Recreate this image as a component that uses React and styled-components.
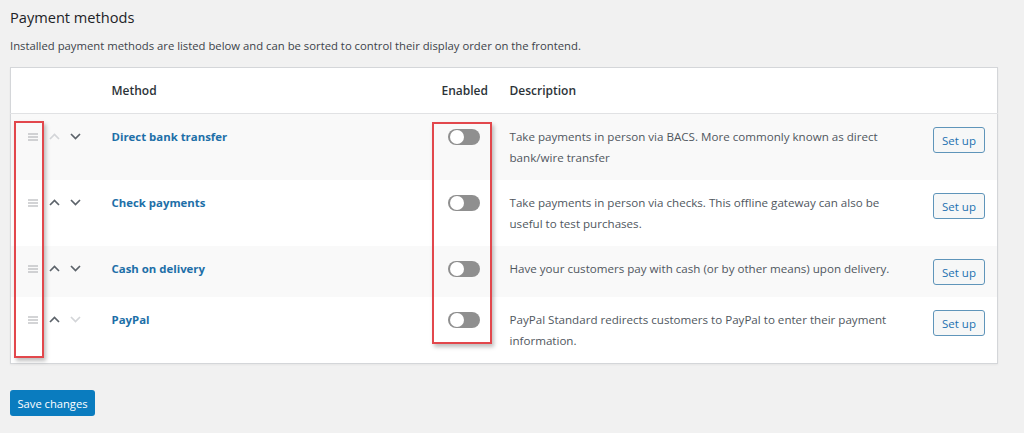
import React from "react";
import styled, { createGlobalStyle } from "styled-components";

const GlobalStyle = createGlobalStyle`
  html, body {
    margin: 0;
    padding: 0;
    background: #f1f1f1;
  }
  body {
    font-family: "Open Sans", "Noto Sans", sans-serif;
    color: #3c434a;
  }
`;

const Page = styled.div`
  position: relative;
  width: 1024px;
  height: 433px;
  padding: 6px 26px 0 10px;
  box-sizing: border-box;
  overflow: hidden;
`;

const Title = styled.h2`
  margin: 0;
  font-size: 14.6px;
  font-weight: 400;
  line-height: 22px;
  color: #1d2327;
`;

const Intro = styled.p`
  margin: 9px 0 12px;
  font-size: 11.3px;
  line-height: 18px;
  color: #3c434a;
`;

const Table = styled.table`
  width: 988px;
  border-collapse: collapse;
  background: #fff;
  border: 1px solid #d4d6d9;
  box-shadow: 0 1px 2px rgba(0, 0, 0, 0.05);
  table-layout: fixed;
`;

const Th = styled.th`
  text-align: ${(p) => p.$align || "left"};
  font-size: 12px;
  font-weight: 600;
  color: #2c3338;
  line-height: 21px;
  padding: 12px 12px;
  border-bottom: 1px solid #e1e2e4;
`;

const Row = styled.tr`
  background: ${(p) => (p.$striped ? "#f9f9f9" : "#fff")};
`;

const Td = styled.td`
  vertical-align: top;
  text-align: ${(p) => p.$align || "left"};
  padding: 12px 12px;
  font-size: 11.6px;
  line-height: 21px;
`;

const SortCell = styled.div`
  display: flex;
  align-items: center;
  height: 21px;
  padding-left: 4px;
`;

const Handle = styled.span`
  display: inline-flex;
  width: 12px;
  justify-content: center;
  margin-right: 5px;
`;

const Arrow = styled.button`
  border: 0;
  background: none;
  padding: 0;
  width: 21px;
  height: 21px;
  display: inline-flex;
  align-items: center;
  justify-content: center;
  cursor: ${(p) => (p.$disabled ? "default" : "pointer")};
  color: ${(p) => (p.$disabled ? "#d3d5d8" : "#5c636a")};
`;

const MethodName = styled.a`
  font-weight: 700;
  font-size: 11.4px;
  color: #1d6fa8;
  text-decoration: none;
`;

const Toggle = styled.span`
  display: inline-block;
  position: relative;
  width: 32px;
  height: 16px;
  margin-top: 3px;
  border-radius: 8px;
  background: #8f8f8f;
  vertical-align: top;
  &::after {
    content: "";
    position: absolute;
    left: 2px;
    top: 1px;
    width: 14px;
    height: 14px;
    border-radius: 50%;
    background: #fff;
  }
`;

const Desc = styled.span`
  color: #50575e;
`;

const SetUp = styled.button`
  font-family: inherit;
  font-size: 11.5px;
  color: #2271b1;
  background: #f6f7f7;
  border: 1px solid #5f95ba;
  border-radius: 3px;
  height: 26px;
  width: 52px;
  padding: 0;
  margin-top: 1px;
  cursor: pointer;
`;

const Save = styled.button`
  margin-top: 26px;
  font-family: inherit;
  font-size: 11.2px;
  color: #fff;
  background: #0a7cbf;
  border: 0;
  border-radius: 3px;
  height: 26px;
  width: 85px;
  padding: 0;
  cursor: pointer;
`;

const Highlight = styled.div`
  position: absolute;
  box-sizing: border-box;
  border: 2.5px solid #e2474c;
  box-shadow: 2px 3px 4px rgba(0, 0, 0, 0.25);
  pointer-events: none;
`;

const HandleIcon = () => (
  <svg width="10" height="8" viewBox="0 0 10 8">
    <path d="M0 1h10M0 4h10M0 7h10" stroke="#a7aaad" strokeWidth="1.2" />
  </svg>
);

const Chevron = ({ up }) => (
  <svg width="11" height="7" viewBox="0 0 11 7">
    <path
      d={up ? "M1 6 5.5 1.5 10 6" : "M1 1 5.5 5.5 10 1"}
      fill="none"
      stroke="currentColor"
      strokeWidth="1.7"
    />
  </svg>
);

const methods = [
  {
    name: "Direct bank transfer",
    desc: "Take payments in person via BACS. More commonly known as direct bank/wire transfer",
  },
  {
    name: "Check payments",
    desc: "Take payments in person via checks. This offline gateway can also be useful to test purchases.",
  },
  {
    name: "Cash on delivery",
    desc: "Have your customers pay with cash (or by other means) upon delivery.",
  },
  {
    name: "PayPal",
    desc: "PayPal Standard redirects customers to PayPal to enter their payment information.",
  },
];

export default function App() {
  return (
    <>
      <GlobalStyle />
      <Page>
        <Title>Payment methods</Title>
        <Intro>
          Installed payment methods are listed below and can be sorted to control their display order on
          the frontend.
        </Intro>
        <Table>
          <colgroup>
            <col style={{ width: 89 }} />
            <col style={{ width: 330 }} />
            <col style={{ width: 68 }} />
            <col style={{ width: 420 }} />
            <col />
          </colgroup>
          <thead>
            <tr>
              <Th />
              <Th>Method</Th>
              <Th $align="center">Enabled</Th>
              <Th>Description</Th>
              <Th />
            </tr>
          </thead>
          <tbody>
            {methods.map((m, i) => (
              <Row key={m.name} $striped={i % 2 === 0}>
                <Td>
                  <SortCell>
                    <Handle>
                      <HandleIcon />
                    </Handle>
                    <Arrow $disabled={i === 0} aria-label="Move up">
                      <Chevron up />
                    </Arrow>
                    <Arrow $disabled={i === methods.length - 1} aria-label="Move down">
                      <Chevron />
                    </Arrow>
                  </SortCell>
                </Td>
                <Td>
                  <MethodName href="#">{m.name}</MethodName>
                </Td>
                <Td $align="center">
                  <Toggle />
                </Td>
                <Td>
                  <Desc>{m.desc}</Desc>
                </Td>
                <Td $align="right">
                  <SetUp>Set up</SetUp>
                </Td>
              </Row>
            ))}
          </tbody>
        </Table>
        <Save>Save changes</Save>
        <Highlight style={{ left: 14, top: 121, width: 30, height: 237 }} />
        <Highlight style={{ left: 432, top: 122, width: 60, height: 222 }} />
      </Page>
    </>
  );
}
